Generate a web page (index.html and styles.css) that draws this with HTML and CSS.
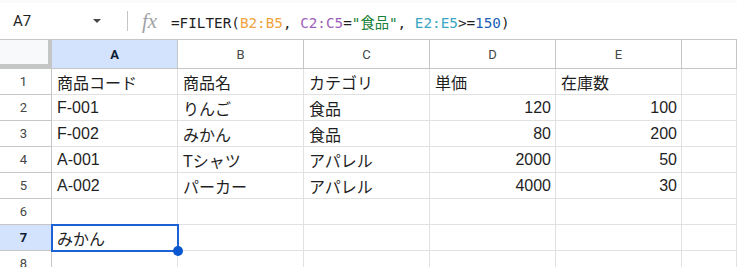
FILE: index.html
```html
<!DOCTYPE html>
<html lang="ja">
<head>
  <meta charset="UTF-8">
  <title>FILTER</title>
  <link rel="stylesheet" href="styles.css">
</head>
<body>

  <div class="top-strip"></div>

  <div class="formula-bar">
    <div class="name-box">
      <span class="cell-ref">A7</span>
      <span class="caret"></span>
    </div>
    <div class="sep"></div>
    <span class="fx">fx</span>
    <div class="formula">=FILTER(<span class="r1">B2:B5</span>, <span class="r2">C2:C5</span>=<span class="str">"食品"</span>, <span class="r3">E2:E5</span>&gt;=<span class="num">150</span>)</div>
  </div>

  <div class="grid">
    <div class="corner"></div>
    <div class="col-head active">A</div>
    <div class="col-head">B</div>
    <div class="col-head">C</div>
    <div class="col-head">D</div>
    <div class="col-head">E</div>
    <div class="col-head"></div>

    <div class="row-head">1</div>
    <div class="cell">商品コード</div>
    <div class="cell">商品名</div>
    <div class="cell">カテゴリ</div>
    <div class="cell">単価</div>
    <div class="cell">在庫数</div>
    <div class="cell"></div>

    <div class="row-head">2</div>
    <div class="cell">F-001</div>
    <div class="cell">りんご</div>
    <div class="cell">食品</div>
    <div class="cell num-cell">120</div>
    <div class="cell num-cell">100</div>
    <div class="cell"></div>

    <div class="row-head">3</div>
    <div class="cell">F-002</div>
    <div class="cell">みかん</div>
    <div class="cell">食品</div>
    <div class="cell num-cell">80</div>
    <div class="cell num-cell">200</div>
    <div class="cell"></div>

    <div class="row-head">4</div>
    <div class="cell">A-001</div>
    <div class="cell">Tシャツ</div>
    <div class="cell">アパレル</div>
    <div class="cell num-cell">2000</div>
    <div class="cell num-cell">50</div>
    <div class="cell"></div>

    <div class="row-head">5</div>
    <div class="cell">A-002</div>
    <div class="cell">パーカー</div>
    <div class="cell">アパレル</div>
    <div class="cell num-cell">4000</div>
    <div class="cell num-cell">30</div>
    <div class="cell"></div>

    <div class="row-head">6</div>
    <div class="cell"></div>
    <div class="cell"></div>
    <div class="cell"></div>
    <div class="cell"></div>
    <div class="cell"></div>
    <div class="cell"></div>

    <div class="row-head active">7</div>
    <div class="cell selected">みかん</div>
    <div class="cell"></div>
    <div class="cell"></div>
    <div class="cell"></div>
    <div class="cell"></div>
    <div class="cell"></div>

    <div class="row-head">8</div>
    <div class="cell"></div>
    <div class="cell"></div>
    <div class="cell"></div>
    <div class="cell"></div>
    <div class="cell"></div>
    <div class="cell"></div>
  </div>

</body>
</html>
```

FILE: styles.css
```css
body {
  margin: 0;
  background: #fff;
  font-family: 'Liberation Sans', 'Noto Sans CJK JP', sans-serif;
  color: #1f1f1f;
  overflow: hidden;
}

.top-strip {
  height: 3px;
  background: #f9fbfd;
}

/* Formula bar */
.formula-bar {
  height: 36px;
  display: flex;
  align-items: center;
  border-bottom: 1px solid #c4c7c5;
}

.name-box {
  width: 114px;
  display: flex;
  align-items: center;
  justify-content: space-between;
  padding: 0 13px 0 13px;
  box-sizing: border-box;
}

.cell-ref {
  font-family: Roboto, 'Liberation Sans', sans-serif;
  font-size: 15px;
  color: #1f1f1f;
}

.caret {
  width: 0;
  height: 0;
  border-left: 4px solid transparent;
  border-right: 4px solid transparent;
  border-top: 4px solid #444746;
}

.sep {
  width: 1px;
  height: 20px;
  background: #c4c7c5;
  margin-left: 13px;
}

.fx {
  font-family: 'Liberation Serif', serif;
  font-style: italic;
  font-size: 21px;
  color: #a0a3a6;
  margin-left: 14px;
  width: 29px;
}

.formula {
  font-family: 'DejaVu Sans Mono', 'Noto Sans CJK JP', monospace;
  font-size: 14.3px;
  color: #1f1f1f;
  white-space: nowrap;
}

.r1 { color: #f0a33e; }
.r2 { color: #a05fba; }
.r3 { color: #3aa6c2; }
.str { color: #188038; }
.num { color: #1b5fb5; }

/* Grid */
.grid {
  display: grid;
  grid-template-columns: 52px repeat(5, 126px) 1fr;
  grid-template-rows: 29px;
  grid-auto-rows: 26px;
}

.corner {
  background: #f8f9fa;
  border-right: 4px solid #c4c7c5;
  border-bottom: 5px solid #c4c7c5;
}

.col-head {
  display: flex;
  align-items: center;
  justify-content: center;
  font-family: Roboto, 'Liberation Sans', sans-serif;
  font-size: 13px;
  color: #444746;
  border-right: 1px solid #c4c7c5;
  border-bottom: 1px solid #c4c7c5;
  padding-top: 1px;
}

.col-head.active {
  background: #d3e3fd;
  color: #0b1a33;
  font-weight: bold;
}

.row-head {
  display: flex;
  align-items: center;
  justify-content: center;
  font-family: Roboto, 'Liberation Sans', sans-serif;
  font-size: 13px;
  color: #444746;
  border-right: 1px solid #c4c7c5;
  border-bottom: 1px solid #c4c7c5;
  padding-right: 4px;
}

.row-head.active {
  background: #d3e3fd;
  color: #0b1a33;
  font-weight: bold;
}

.cell {
  display: flex;
  align-items: center;
  padding: 1px 4px 0 5px;
  font-size: 16px;
  white-space: nowrap;
  border-right: 1px solid #e1e1e1;
  border-bottom: 1px solid #e1e1e1;
  min-width: 0;
}

.num-cell {
  justify-content: flex-end;
}

.selected {
  position: relative;
  outline: 2px solid #1a62d6;
  outline-offset: -1px;
}

.selected::after {
  content: "";
  position: absolute;
  right: -6px;
  bottom: -6px;
  width: 10px;
  height: 10px;
  border-radius: 50%;
  background: #0b57d0;
}
```
